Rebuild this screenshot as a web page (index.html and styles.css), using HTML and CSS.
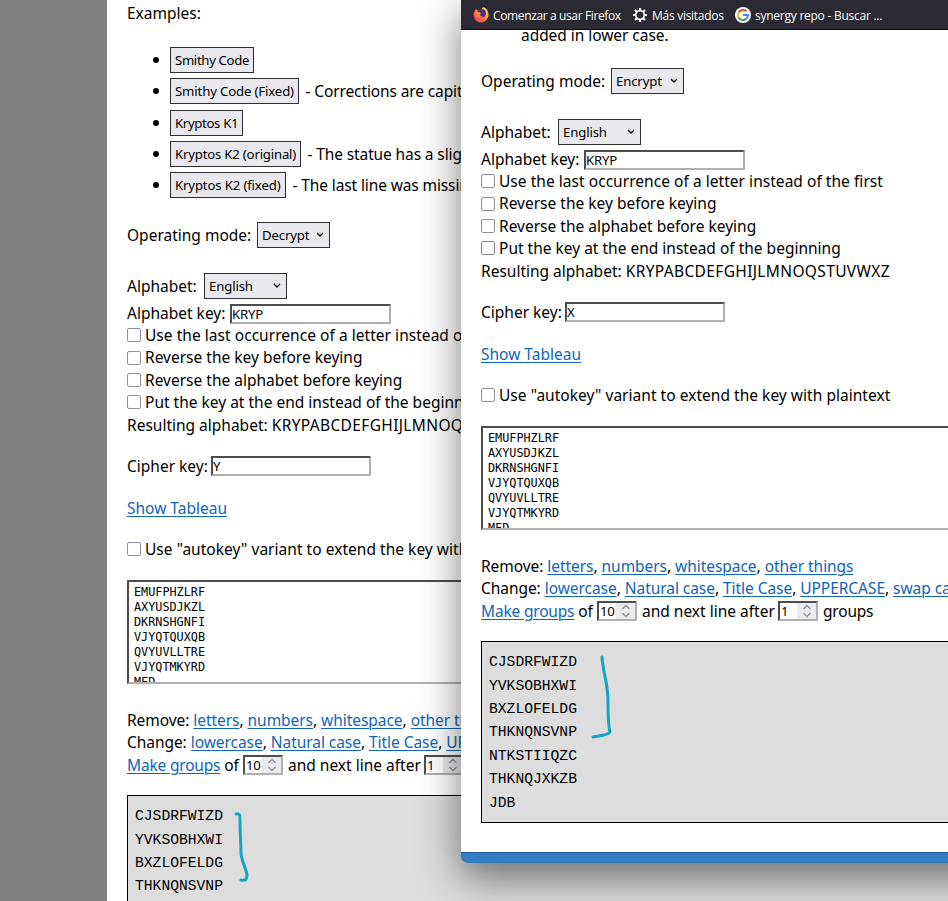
FILE: index.html
```html
<!DOCTYPE html>
<html lang="en">
<head>
<meta charset="utf-8">
<title>Cipher tool</title>
<link rel="stylesheet" href="styles.css">
</head>
<body>
<main class="page">
  <p class="examples-title">Examples:</p>
  <ul class="examples">
    <li><button class="w1">Smithy Code</button></li>
    <li><button class="w2">Smithy Code (Fixed)</button><span>- Corrections are capital letters</span></li>
    <li><button class="w3">Kryptos K1</button></li>
    <li><button class="w4">Kryptos K2 (original)</button><span>- The statue has a slight error</span></li>
    <li><button class="w5">Kryptos K2 (fixed)</button><span>- The last line was missing a letter</span></li>
  </ul>
  <section class="form">
    <div class="row mode"><span class="l-mode">Operating mode:</span><span class="select s-mode">Decrypt<svg viewBox="0 0 8 6"><path d="M1 1l3 3 3-3"/></svg></span></div>
    <div class="row alpha"><span class="l-alpha">Alphabet:</span><span class="select s-alpha">English<svg viewBox="0 0 8 6"><path d="M1 1l3 3 3-3"/></svg></span></div>
    <div class="row key"><span class="l-key">Alphabet key:</span><span class="input">KRYP</span></div>
    <label class="row line"><i class="box"></i><span class="c1">Use the last occurrence of a letter instead of the first</span></label>
    <label class="row line"><i class="box"></i><span>Reverse the key before keying</span></label>
    <label class="row line"><i class="box"></i><span>Reverse the alphabet before keying</span></label>
    <label class="row line"><i class="box"></i><span>Put the key at the end instead of the beginning</span></label>
    <div class="row line">Resulting alphabet:&nbsp;<span class="result">KRYPABCDEFGHIJLMNOQSTUVWXZ</span></div>
    <div class="row cipher"><span class="l-cipher">Cipher key:</span><span class="input short">Y</span></div>
    <div class="row tableau"><a>Show Tableau</a></div>
    <label class="row autokey"><i class="box"></i><span>Use "autokey" variant to extend the key with plaintext</span></label>
    <pre class="source">EMUFPHZLRF
AXYUSDJKZL
DKRNSHGNFI
VJYQTQUXQB
QVYUVLLTRE
VJYQTMKYRD
MFD</pre>
    <div class="row line links">Remove: <a>letters</a>, <a>numbers</a>, <a>whitespace</a>, <a>other things</a></div>
    <div class="row line links">Change: <a>lowercase</a>, <a>Natural case</a>, <a>Title Case</a>, <a>UPPERCASE</a>, <a>swap case</a></div>
    <div class="row line groups"><span class="l-make"><a>Make groups</a> of</span><span class="num">10<i><svg viewBox="0 0 10 14"><path d="M1.500 5L5 1.500 8.500 5M1.500 9L5 12.500 8.500 9"/></svg></i></span><span class="l-next">and next line after</span><span class="num">1<i><svg viewBox="0 0 10 14"><path d="M1.500 5L5 1.500 8.500 5M1.500 9L5 12.500 8.500 9"/></svg></i></span><span class="l-groups">groups</span></div>
    <pre class="output">CJSDRFWIZD
YVKSOBHXWI
BXZLOFELDG
THKNQNSVNP
NTKSTIIQZC
THKNQJXKZB
JDB<svg class="mark" viewBox="0 0 60 100"><path d="M28 19C32 18 32 20 32 25C32 40 33 47 33 59C34 67 38 73 39 80C39 84 38 86 33 85"/></svg></pre>
  </section>
</main>
<div class="window">
  <nav class="bookmarks">
    <svg class="fox" viewBox="0 0 16 16"><defs><linearGradient id="flame" x1="1" y1="0" x2="0" y2="1"><stop offset="0" stop-color="#ffe14a"/><stop offset=".35" stop-color="#ffa040"/><stop offset=".75" stop-color="#ff4a56"/><stop offset="1" stop-color="#e31587"/></linearGradient></defs><path fill="url(#flame)" d="M10.500 0Q15 2 15.500 7A7.500 7.500 0 1 1 2 3.500L3 2 4.500 3.500 7 3.500Z"/><circle cx="8.700" cy="6.300" r="4.300" fill="#4b2f82"/><path fill="#ff8a40" d="M2.500 5Q5 4 8 6Q8 7.200 6.500 7.700Q7 9.500 10 9.500Q6 12 3 9Z"/></svg>
    <span class="b1">Comenzar a usar Firefox</span>
    <svg class="gear" viewBox="0 0 16 16"><g stroke="#fbfbfe" fill="none"><circle cx="8" cy="8" r="4.300" stroke-width="1.700"/><path stroke-width="2.100" d="M8 1v2.500M8 12.500V15M1 8h2.500M12.500 8H15M3.050 3.050l1.700 1.700M11.250 11.250l1.700 1.700M3.050 12.950l1.700-1.700M11.250 4.750l1.700-1.700"/></g></svg>
    <span class="b2">Más visitados</span>
    <svg class="goog" viewBox="0 0 16 16"><circle cx="8" cy="8" r="8" fill="#fff"/><g fill="none" stroke-width="2"><path stroke="#ea4335" d="M3.500 5.500A5.100 5.100 0 0 1 11.600 4.400"/><path stroke="#fbbc05" d="M3.500 10.500A5.100 5.100 0 0 1 3.500 5.500"/><path stroke="#34a853" d="M11.400 11.800A5.100 5.100 0 0 1 3.500 10.500"/><path stroke="#4285f4" d="M8 8h5A5.100 5.100 0 0 1 11.400 11.800"/></g></svg>
    <span class="b3">synergy repo - Buscar ...</span>
  </nav>
  <div class="content">
  <p class="note">added in lower case.</p>
  <section class="form">
    <div class="row mode"><span class="l-mode">Operating mode:</span><span class="select s-mode">Encrypt<svg viewBox="0 0 8 6"><path d="M1 1l3 3 3-3"/></svg></span></div>
    <div class="row alpha"><span class="l-alpha">Alphabet:</span><span class="select s-alpha">English<svg viewBox="0 0 8 6"><path d="M1 1l3 3 3-3"/></svg></span></div>
    <div class="row key"><span class="l-key">Alphabet key:</span><span class="input">KRYP</span></div>
    <label class="row line"><i class="box"></i><span class="c1">Use the last occurrence of a letter instead of the first</span></label>
    <label class="row line"><i class="box"></i><span>Reverse the key before keying</span></label>
    <label class="row line"><i class="box"></i><span>Reverse the alphabet before keying</span></label>
    <label class="row line"><i class="box"></i><span>Put the key at the end instead of the beginning</span></label>
    <div class="row line">Resulting alphabet:&nbsp;<span class="result">KRYPABCDEFGHIJLMNOQSTUVWXZ</span></div>
    <div class="row cipher"><span class="l-cipher">Cipher key:</span><span class="input short">X</span></div>
    <div class="row tableau"><a>Show Tableau</a></div>
    <label class="row autokey"><i class="box"></i><span>Use "autokey" variant to extend the key with plaintext</span></label>
    <pre class="source">EMUFPHZLRF
AXYUSDJKZL
DKRNSHGNFI
VJYQTQUXQB
QVYUVLLTRE
VJYQTMKYRD
MFD</pre>
    <div class="row line links">Remove: <a>letters</a>, <a>numbers</a>, <a>whitespace</a>, <a>other things</a></div>
    <div class="row line links">Change: <a>lowercase</a>, <a>Natural case</a>, <a>Title Case</a>, <a>UPPERCASE</a>, <a>swap case</a></div>
    <div class="row line groups"><span class="l-make"><a>Make groups</a> of</span><span class="num">10<i><svg viewBox="0 0 10 14"><path d="M1.500 5L5 1.500 8.500 5M1.500 9L5 12.500 8.500 9"/></svg></i></span><span class="l-next">and next line after</span><span class="num">1<i><svg viewBox="0 0 10 14"><path d="M1.500 5L5 1.500 8.500 5M1.500 9L5 12.500 8.500 9"/></svg></i></span><span class="l-groups">groups</span></div>
    <pre class="output">CJSDRFWIZD
YVKSOBHXWI
BXZLOFELDG
THKNQNSVNP
NTKSTIIQZC
THKNQJXKZB
JDB<svg class="mark" viewBox="0 0 60 100"><path d="M40 16C41 32 46 42 46 60C46 72 46 84 48 91C47 94 37 95 31 96"/></svg></pre>
  </section>
  </div>
</div>
</body>
</html>
```
FILE: styles.css
```css
* { box-sizing: border-box; }
body {
  margin: 0;
  height: 901px;
  position: relative;
  overflow: hidden;
  background: #808080;
  color: #000;
  font: 15.5px/22.4px "Noto Sans", sans-serif;
  letter-spacing: 0;
}
.page {
  margin-left: 107px;
  height: 901px;
  padding: 2px 0 0 20px;
  overflow: hidden;
  background: #fff;
  white-space: nowrap;
}
p { margin: 0; }
.examples-title { height: 45px; }
.examples { list-style: none; margin: 0; padding: 0 0 0 26px; height: 175px; }
.examples li { display: flex; align-items: center; height: 26px; margin-bottom: 5.25px; }
.examples li::before { content: ""; width: 6px; height: 6px; border-radius: 50%; background: #000; margin-right: 11px; }
.examples span { margin-left: 6.5px; letter-spacing: -0.12px; }
button, .select {
  height: 26px;
  border: 1px solid #2e2e33;
  border-radius: 0;
  background: #e9e9ed;
  color: #000;
  font: 13.2px/24px "Noto Sans", sans-serif;
  letter-spacing: -0.15px;
  padding: 0 4px;
  text-align: left;
  white-space: nowrap;
}
button { letter-spacing: -0.35px; }
.w1 { width: 84px; }
.w2 { width: 129px; letter-spacing: -0.15px; }
.w3 { width: 73px; }
.w4 { width: 131px; letter-spacing: -0.2px; }
.w5 { width: 116px; letter-spacing: -0.15px; }

.form { white-space: nowrap; }
.row { display: flex; align-items: center; flex: none; }
.line { height: 22.4px; }
.links { display: block; letter-spacing: -0.05px; }
.c1 { letter-spacing: 0.04px; }
.result { letter-spacing: 0.36px; }
.mode { height: 26px; margin-bottom: 25px; }
.alpha { height: 26px; margin-bottom: 4px; }
.key { height: 21px; }
.cipher { height: 21px; margin-top: 20px; }
.tableau { height: 22px; margin-top: 20px; }
.autokey { height: 22px; margin: 19px 0 20px; letter-spacing: 0.03px; }
.l-mode { width: 130px; }
.l-alpha { width: 77px; }
.l-key { width: 103px; }
.l-cipher { width: 84px; }
.l-make { width: 116px; letter-spacing: -0.18px; }
.l-next { width: 141px; padding-left: 5px; }
.l-groups { padding-left: 5px; letter-spacing: -0.2px; }
.select { display: flex; align-items: center; justify-content: space-between; padding-right: 5px; }
.select svg { width: 8px; height: 6px; fill: none; stroke: #000; stroke-width: 1.4; }
.s-mode { width: 73px; }
.s-alpha { width: 83px; }
.input, .num {
  height: 20px;
  border: 2px solid;
  border-color: #4d4d4d #b0b0b0 #b0b0b0 #4d4d4d;
  background: #fff;
  font-size: 13.2px;
  line-height: 17px;
  letter-spacing: -0.2px;
}
.input { width: 161px; }
.input.short { width: 160px; }
.num { display: flex; width: 40px; padding-left: 1px; justify-content: space-between; }
.num i { width: 19px; background: #ebebef; display: flex; align-items: center; justify-content: center; }
.num svg { width: 10px; height: 14px; fill: none; stroke: #91919b; stroke-width: 1.4; }
.box { width: 14px; height: 14px; border: 1px solid #8f8f9d; border-radius: 2px; background: #fff; margin-right: 4px; }
a { color: #0f65b8; text-decoration: underline; text-underline-offset: 2px; text-decoration-thickness: 1px; }
.source {
  margin: 0 0 25px;
  width: 900px;
  height: 104px;
  padding: 3px 5px 0;
  overflow: hidden;
  border: 2px solid;
  border-color: #4d4d4d #b0b0b0 #b0b0b0 #4d4d4d;
  background: #fff;
  font: 11.8px/15px "DejaVu Sans Mono", monospace;
  letter-spacing: 0;
}
.output {
  position: relative;
  margin: 19px 0 0;
  width: 900px;
  height: 182px;
  padding: 9px 7px;
  border: 1px solid #000;
  background: #ddd;
  font: 14.67px/23.4px "Liberation Mono", monospace;
  letter-spacing: 0;
}
.mark { position: absolute; left: 80px; top: -1px; width: 60px; height: 100px; fill: none; stroke: #14a5c5; stroke-width: 3; stroke-linecap: round; stroke-linejoin: round; }

.window {
  position: absolute;
  left: 461px;
  top: 0;
  width: 560px;
  height: 863px;
  border-radius: 0 0 7px 7px;
  overflow: hidden;
  background: #fff;
  border-bottom: 10px solid #337dc1;
  box-shadow: 0 14px 40px rgba(0, 0, 0, 0.52);
}
.bookmarks {
  display: flex;
  align-items: center;
  height: 30px;
  padding: 0 0 0 12px;
  background: #2b2a33;
  border-bottom: 1px solid #0c0c0d;
  color: #fbfbfe;
  font: 12px/16px "Open Sans", sans-serif;
  letter-spacing: -0.2px;
  white-space: nowrap;
}
.bookmarks span { padding-top: 2px; }
.bookmarks svg { width: 16px; height: 16px; flex: none; }
.b1 { width: 143px; padding-left: 4px; letter-spacing: -0.37px; }
.b2 { width: 87px; padding-left: 4px; letter-spacing: -0.28px; }
.b3 { padding-left: 4px; letter-spacing: -0.25px; }
.content { padding-left: 20px; height: 823px; border-bottom: 1px solid #1c5c9a; overflow: hidden; }
.note { padding-left: 40px; height: 38px; line-height: 11px; letter-spacing: -0.05px; }
```
